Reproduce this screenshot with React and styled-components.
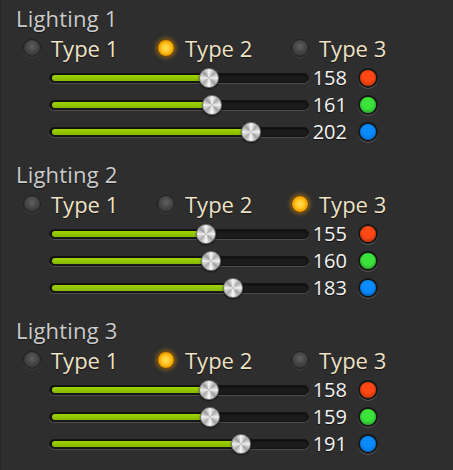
import React from "react";
import styled, { createGlobalStyle } from "styled-components";

const GlobalStyle = createGlobalStyle`
  html, body {
    margin: 0;
    background: #2e2e2e;
  }
`;

const Panel = styled.div`
  width: 453px;
  height: 470px;
  box-sizing: border-box;
  padding: 6px 0 0 15px;
  background: #2e2e2e;
  border-left: 1px solid #2a2422;
  font-family: "Open Sans", "Noto Sans", sans-serif;
  overflow: hidden;
`;

const Section = styled.div`
  display: flex;
  flex-direction: column;
  margin-bottom: 17px;
`;

const Title = styled.div`
  height: 24px;
  line-height: 24px;
  font-size: 22px;
  letter-spacing: 0.2px;
  color: #cbcbcb;
  margin-bottom: 3px;
  text-shadow: 0 1px 1px rgba(0, 0, 0, 0.5);
`;

const RadioRow = styled.div`
  display: grid;
  grid-template-columns: 134px 134px 134px;
  height: 28px;
  margin: 1px 0 2px 7px;
`;

const Option = styled.div`
  display: flex;
  align-items: center;
  gap: 10px;
`;

const RadioDot = styled.div`
  width: 18px;
  height: 18px;
  border-radius: 50%;
  box-sizing: border-box;
  background: ${(p) =>
    p.$on
      ? "radial-gradient(circle at 50% 50%, #ffe066 0, #ffc61e 40%, #f0a000 62%, #a86400 85%, #6a4200 100%)"
      : "radial-gradient(circle at 50% 40%, #606060 0, #464646 45%, #323232 80%, #282828 100%)"};
  border: 1px solid ${(p) => (p.$on ? "#7a4c00" : "#202020")};
  box-shadow: ${(p) =>
    p.$on
      ? "0 0 4px 1px rgba(255, 170, 20, 0.45)"
      : "0 1px 0 rgba(255, 255, 255, 0.1)"};
`;

const OptionLabel = styled.span`
  font-size: 22px;
  line-height: 28px;
  color: #f0e2c4;
  text-shadow: 0 1px 1px rgba(0, 0, 0, 0.6);
`;

const SliderRow = styled.div`
  display: flex;
  align-items: center;
  height: 27px;
  margin-left: 33px;
`;

const Track = styled.div`
  position: relative;
  width: 260px;
  height: 10px;
  box-sizing: border-box;
  border-radius: 6px;
  background: #1b1b1b;
  border: 1px solid #141414;
  box-shadow: 0 1px 0 #4c4c4c, inset 0 1px 2px rgba(0, 0, 0, 0.6);
`;

const Fill = styled.div`
  position: absolute;
  left: 2px;
  top: 1px;
  height: 6px;
  border-radius: 3px;
  background: linear-gradient(#9fd400, #86b800);
`;

const Knob = styled.div`
  position: absolute;
  top: 50%;
  width: 20px;
  height: 20px;
  box-sizing: border-box;
  margin: -10px 0 0 -10px;
  border-radius: 50%;
  border: 1px solid #777;
  background: radial-gradient(circle at 50% 50%, rgba(255, 255, 255, 0.5) 0, rgba(255, 255, 255, 0) 30%),
    conic-gradient(
      #f8f8f8,
      #a8a8a8 45deg,
      #f2f2f2 90deg,
      #9e9e9e 135deg,
      #fbfbfb 180deg,
      #ababab 225deg,
      #efefef 270deg,
      #9c9c9c 315deg,
      #f8f8f8
    );
  box-shadow: 0 1px 2px rgba(0, 0, 0, 0.7);
`;

const Value = styled.span`
  width: 38px;
  text-align: right;
  font-size: 20px;
  line-height: 27px;
  color: #f4f4f4;
  text-shadow: 0 1px 1px rgba(0, 0, 0, 0.6);
`;

const ColorDot = styled.div`
  width: 20px;
  height: 20px;
  box-sizing: border-box;
  margin-left: 11px;
  border-radius: 50%;
  border: 2px solid #161616;
  background: ${(p) => p.$color};
  box-shadow: 0 1px 0 #5a5a5a, inset 0 -2px 3px rgba(0, 0, 0, 0.25);
`;

const COLORS = ["#ff4814", "#3be43b", "#0a8cff"];

const sections = [
  { title: "Lighting 1", type: 1, values: [158, 161, 202] },
  { title: "Lighting 2", type: 2, values: [155, 160, 183] },
  { title: "Lighting 3", type: 1, values: [158, 159, 191] },
];

function Slider({ value }) {
  const pos = 5 + (value / 255) * 248;
  return (
    <Track>
      <Fill style={{ width: pos - 2 }} />
      <Knob style={{ left: pos }} />
    </Track>
  );
}

export default function App() {
  return (
    <Panel>
      <GlobalStyle />
      {sections.map((s) => (
        <Section key={s.title}>
          <Title>{s.title}</Title>
          <RadioRow>
            {["Type 1", "Type 2", "Type 3"].map((t, i) => (
              <Option key={t}>
                <RadioDot $on={i === s.type} />
                <OptionLabel>{t}</OptionLabel>
              </Option>
            ))}
          </RadioRow>
          {s.values.map((v, i) => (
            <SliderRow key={i}>
              <Slider value={v} />
              <Value>{v}</Value>
              <ColorDot $color={COLORS[i]} />
            </SliderRow>
          ))}
        </Section>
      ))}
    </Panel>
  );
}
